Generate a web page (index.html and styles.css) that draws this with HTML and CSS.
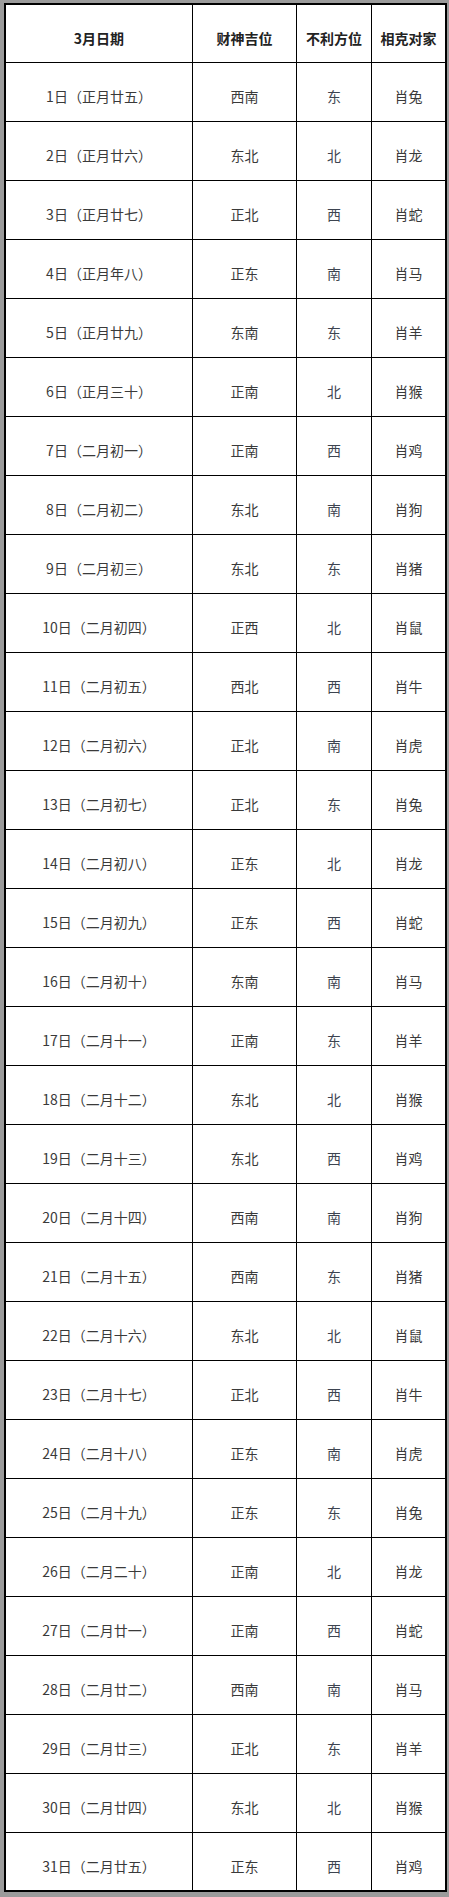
FILE: index.html
```html
<!DOCTYPE html>
<html lang="zh-CN">
<head>
<meta charset="utf-8">
<title>3月财神方位</title>
<link rel="stylesheet" href="styles.css">
</head>
<body>
<div class="sheet">
  <div class="grid">
    <div class="cell head">3月日期</div><div class="cell head">财神吉位</div><div class="cell head">不利方位</div><div class="cell head">相克对家</div>
    <div class="cell">1日（正月廿五）</div><div class="cell">西南</div><div class="cell dir">东</div><div class="cell">肖兔</div>
    <div class="cell">2日（正月廿六）</div><div class="cell">东北</div><div class="cell dir">北</div><div class="cell">肖龙</div>
    <div class="cell">3日（正月廿七）</div><div class="cell">正北</div><div class="cell dir">西</div><div class="cell">肖蛇</div>
    <div class="cell">4日（正月年八）</div><div class="cell">正东</div><div class="cell dir">南</div><div class="cell">肖马</div>
    <div class="cell">5日（正月廿九）</div><div class="cell">东南</div><div class="cell dir">东</div><div class="cell">肖羊</div>
    <div class="cell">6日（正月三十）</div><div class="cell">正南</div><div class="cell dir">北</div><div class="cell">肖猴</div>
    <div class="cell">7日（二月初一）</div><div class="cell">正南</div><div class="cell dir">西</div><div class="cell">肖鸡</div>
    <div class="cell">8日（二月初二）</div><div class="cell">东北</div><div class="cell dir">南</div><div class="cell">肖狗</div>
    <div class="cell">9日（二月初三）</div><div class="cell">东北</div><div class="cell dir">东</div><div class="cell">肖猪</div>
    <div class="cell">10日（二月初四）</div><div class="cell">正西</div><div class="cell dir">北</div><div class="cell">肖鼠</div>
    <div class="cell">11日（二月初五）</div><div class="cell">西北</div><div class="cell dir">西</div><div class="cell">肖牛</div>
    <div class="cell">12日（二月初六）</div><div class="cell">正北</div><div class="cell dir">南</div><div class="cell">肖虎</div>
    <div class="cell">13日（二月初七）</div><div class="cell">正北</div><div class="cell dir">东</div><div class="cell">肖兔</div>
    <div class="cell">14日（二月初八）</div><div class="cell">正东</div><div class="cell dir">北</div><div class="cell">肖龙</div>
    <div class="cell">15日（二月初九）</div><div class="cell">正东</div><div class="cell dir">西</div><div class="cell">肖蛇</div>
    <div class="cell">16日（二月初十）</div><div class="cell">东南</div><div class="cell dir">南</div><div class="cell">肖马</div>
    <div class="cell">17日（二月十一）</div><div class="cell">正南</div><div class="cell dir">东</div><div class="cell">肖羊</div>
    <div class="cell">18日（二月十二）</div><div class="cell">东北</div><div class="cell dir">北</div><div class="cell">肖猴</div>
    <div class="cell">19日（二月十三）</div><div class="cell">东北</div><div class="cell dir">西</div><div class="cell">肖鸡</div>
    <div class="cell">20日（二月十四）</div><div class="cell">西南</div><div class="cell dir">南</div><div class="cell">肖狗</div>
    <div class="cell">21日（二月十五）</div><div class="cell">西南</div><div class="cell dir">东</div><div class="cell">肖猪</div>
    <div class="cell">22日（二月十六）</div><div class="cell">东北</div><div class="cell dir">北</div><div class="cell">肖鼠</div>
    <div class="cell">23日（二月十七）</div><div class="cell">正北</div><div class="cell dir">西</div><div class="cell">肖牛</div>
    <div class="cell">24日（二月十八）</div><div class="cell">正东</div><div class="cell dir">南</div><div class="cell">肖虎</div>
    <div class="cell">25日（二月十九）</div><div class="cell">正东</div><div class="cell dir">东</div><div class="cell">肖兔</div>
    <div class="cell">26日（二月二十）</div><div class="cell">正南</div><div class="cell dir">北</div><div class="cell">肖龙</div>
    <div class="cell">27日（二月廿一）</div><div class="cell">正南</div><div class="cell dir">西</div><div class="cell">肖蛇</div>
    <div class="cell">28日（二月廿二）</div><div class="cell">西南</div><div class="cell dir">南</div><div class="cell">肖马</div>
    <div class="cell">29日（二月廿三）</div><div class="cell">正北</div><div class="cell dir">东</div><div class="cell">肖羊</div>
    <div class="cell">30日（二月廿四）</div><div class="cell">东北</div><div class="cell dir">北</div><div class="cell">肖猴</div>
    <div class="cell">31日（二月廿五）</div><div class="cell">正东</div><div class="cell dir">西</div><div class="cell">肖鸡</div>
  </div>
</div>
</body>
</html>
```
FILE: styles.css
```css
html, body {
  margin: 0;
  padding: 0;
  background: #9b9b9b;
}
body {
  width: 449px;
  height: 1897px;
  overflow: hidden;
  box-sizing: border-box;
  padding: 3px 0 0 4px;
  font-family: "Noto Sans CJK SC", "Noto Sans", sans-serif;
}
.sheet {
  width: 443px;
  box-sizing: border-box;
  border: 2px solid #000;
  background: #000;
}
.grid {
  display: grid;
  grid-template-columns: 186px 103px 74px 73px;
  grid-template-rows: 57px repeat(30, 58px) 57px;
  gap: 1px;
  background: #000;
}
.cell {
  background: #fff;
  display: flex;
  align-items: center;
  justify-content: center;
  box-sizing: border-box;
  padding-top: 8px;
  font-size: 14px;
  line-height: 20px;
  color: #3a3a3a;
  white-space: nowrap;
}
.head {
  font-weight: bold;
  color: #222;
}
.dir {
  color: #3d4450;
}
```
